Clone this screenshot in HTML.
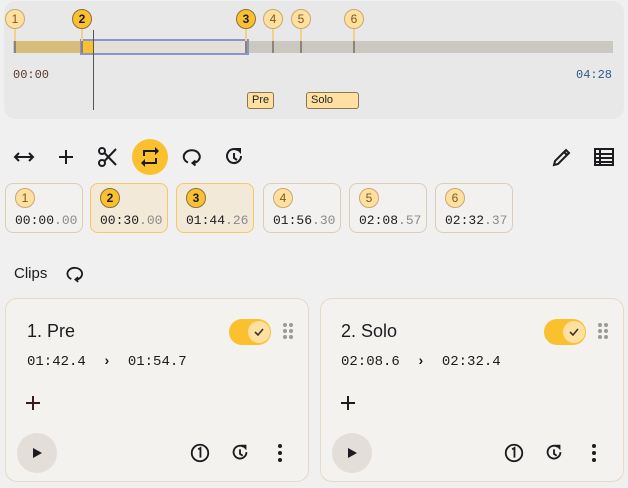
<!DOCTYPE html>
<html><head><meta charset="utf-8"><style>
*{box-sizing:border-box;margin:0;padding:0}
body{width:628px;height:488px;background:#f0f0f0;font-family:"Liberation Sans",sans-serif;position:relative;overflow:hidden;color:#1c1b1f}
.a{position:absolute}
.mk{position:absolute;width:20px;height:20px;border-radius:50%;background:#ffe0a0;border:1px solid #c9a870;font-size:12px;line-height:18px;text-align:center;color:#7a5a20;transform:translate(-50%,-50%)}
.mk.on{background:#fbc02d;border-color:#8a7040;color:#1c1b1f;font-weight:bold}
.tk{position:absolute;width:2px;top:41px;height:12px;background:#8c8478}
.ln{position:absolute;width:2px;top:29px;height:12px;background:#f5cf8a}
.mono{font-family:"Liberation Mono","DejaVu Sans Mono",monospace}
.chip{position:absolute;top:183px;width:78px;height:50px;border:1.5px solid #dccdb5;border-radius:8px;background:#f2f1ef}
.chip.on{background:#f2e9d8;border-color:#f5c865}
.chip .mk{left:9px;top:4px;transform:none}
.chip .t{position:absolute;left:9px;top:29px;font-size:13px;color:#1c1b1f}
.chip .t span{color:#8a8a8a}
.card{position:absolute;top:298px;width:304px;height:184px;background:#f4f2ee;border:1px solid #e6dac6;border-radius:12px}
.lbl{position:absolute;top:92px;height:17px;background:#ffe0a0;border:1px solid #8a7654;border-radius:3px;font-size:11px;line-height:15px;padding-left:4px;color:#222}
svg{position:absolute}
</style></head><body>
<div class="a" style="left:4px;top:1px;width:620px;height:118px;background:#e8e8e8;border-radius:12px"></div>
<div class="a" style="left:13px;top:41px;width:600px;height:12px;background:#cbc8c2"></div>
<div class="a" style="left:14px;top:41px;width:68px;height:12px;background:#d7bd7b"></div>
<div class="a" style="left:80px;top:39px;width:169px;height:16px;background:#e4dfd8;border:2px solid #8a96c8"></div>
<div class="a" style="left:82px;top:41px;width:11px;height:12px;background:#fbc02d"></div>
<div class="ln" style="left:14px"></div><div class="ln" style="left:81px"></div><div class="ln" style="left:245px"></div><div class="ln" style="left:272px"></div><div class="ln" style="left:300px"></div><div class="ln" style="left:353px"></div>
<div class="tk" style="left:14px"></div><div class="tk" style="left:81px"></div><div class="tk" style="left:245px"></div><div class="tk" style="left:272px"></div><div class="tk" style="left:300px"></div><div class="tk" style="left:353px"></div>
<div class="a" style="left:93px;top:30px;width:1px;height:80px;background:#555"></div>
<div class="mk" style="left:15px;top:19px">1</div>
<div class="mk on" style="left:82px;top:19px">2</div>
<div class="mk on" style="left:246px;top:19px">3</div>
<div class="mk" style="left:273px;top:19px">4</div>
<div class="mk" style="left:301px;top:19px">5</div>
<div class="mk" style="left:354px;top:19px">6</div>
<div class="a mono" style="left:13px;top:68px;font-size:12px;color:#5a3a2a">00:00</div>
<div class="a mono" style="left:576px;top:68px;font-size:12px;color:#2d5a8a">04:28</div>
<div class="lbl" style="left:247px;width:27px">Pre</div>
<div class="lbl" style="left:306px;width:53px">Solo</div>

<svg style="left:12px;top:145px" width="24" height="24" viewBox="0 0 24 24"><path d="M3 12h18M7 8l-4 4 4 4M17 8l4 4-4 4" fill="none" stroke="#1c1b1f" stroke-width="2"/></svg>
<svg style="left:54px;top:145px" width="24" height="24" viewBox="0 0 24 24"><path d="M12 5v14M5 12h14" stroke="#1c1b1f" stroke-width="2"/></svg>
<svg style="left:96px;top:145px" width="24" height="24" viewBox="0 0 24 24"><circle cx="6" cy="6" r="3" fill="none" stroke="#1c1b1f" stroke-width="2"/><circle cx="6" cy="18" r="3" fill="none" stroke="#1c1b1f" stroke-width="2"/><path d="M8.5 8L20 20M8.5 16L20 4" stroke="#1c1b1f" stroke-width="2"/></svg>
<div class="a" style="left:132px;top:139px;width:36px;height:36px;border-radius:50%;background:#fbc02d"></div>
<svg style="left:138px;top:145px" width="24" height="24" viewBox="0 0 24 24"><path d="M7 7h10v3l4-4-4-4v3H5v6h2zM17 17H7v-3l-4 4 4 4v-3h12v-6h-2z" fill="#1c1b1f"/></svg>
<svg style="left:180px;top:145px" width="24" height="24" viewBox="0 0 24 24"><path d="M8 17.5A8 6.5 0 1 1 14 18" fill="none" stroke="#1c1b1f" stroke-width="2"/><path d="M15.5 15.5L12.5 18l3 2.5" fill="none" stroke="#1c1b1f" stroke-width="2"/></svg>
<svg style="left:222px;top:145px" width="24" height="24" viewBox="0 0 24 24"><path d="M19 11a7 7 0 1 1-3-5.7" fill="none" stroke="#1c1b1f" stroke-width="2"/><path d="M13 3h6v6z" fill="#1c1b1f"/><path d="M12 8v5l3 2" fill="none" stroke="#1c1b1f" stroke-width="2"/></svg>
<svg style="left:550px;top:145px" width="24" height="24" viewBox="0 0 24 24"><path d="M4 20l1-4L16 5l3 3L8 19zM14 7l3 3" fill="none" stroke="#1c1b1f" stroke-width="2"/></svg>
<svg style="left:592px;top:145px" width="24" height="24" viewBox="0 0 24 24"><rect x="3" y="4" width="18" height="16" fill="none" stroke="#1c1b1f" stroke-width="2"/><path d="M3 9h18M3 13h18M3 17h18M8 4v16" stroke="#1c1b1f" stroke-width="2"/></svg>

<div class="chip" style="left:5px"><div class="mk">1</div><div class="t mono">00:00<span>.00</span></div></div>
<div class="chip on" style="left:90px"><div class="mk on">2</div><div class="t mono">00:30<span>.00</span></div></div>
<div class="chip on" style="left:176px"><div class="mk on">3</div><div class="t mono">01:44<span>.26</span></div></div>
<div class="chip" style="left:263px"><div class="mk">4</div><div class="t mono">01:56<span>.30</span></div></div>
<div class="chip" style="left:349px"><div class="mk">5</div><div class="t mono">02:08<span>.57</span></div></div>
<div class="chip" style="left:435px"><div class="mk">6</div><div class="t mono">02:32<span>.37</span></div></div>

<div class="a" style="left:14px;top:265px;font-size:15px">Clips</div>
<svg style="left:64px;top:263px" width="22" height="22" viewBox="0 0 24 24"><path d="M8 17.5A8 6.5 0 1 1 14 18" fill="none" stroke="#1c1b1f" stroke-width="2"/><path d="M15.5 15.5L12.5 18l3 2.5" fill="none" stroke="#1c1b1f" stroke-width="2"/></svg>

<div class="card" style="left:5px"></div>
<div class="card" style="left:320px"></div>
<div class="a" style="left:27px;top:321px;font-size:18px">1. Pre</div>
<div class="a" style="left:341px;top:321px;font-size:18px">2. Solo</div>
<div class="a mono" style="left:27px;top:354px;font-size:14px">01:42.4 &nbsp;<b>›</b>&nbsp; 01:54.7</div>
<div class="a mono" style="left:341px;top:354px;font-size:14px">02:08.6 &nbsp;<b>›</b>&nbsp; 02:32.4</div>

<div class="a" style="left:229px;top:319px;width:42px;height:26px;border-radius:13px;background:#fbc02d"></div>
<div class="a" style="left:248px;top:321px;width:22px;height:22px;border-radius:50%;background:#ffe0a0"></div>
<svg style="left:251px;top:324px" width="16" height="16" viewBox="0 0 16 16"><path d="M4 8l3 3 5-6" fill="none" stroke="#333" stroke-width="1.6"/></svg>
<div class="a" style="left:544px;top:319px;width:42px;height:26px;border-radius:13px;background:#fbc02d"></div>
<div class="a" style="left:563px;top:321px;width:22px;height:22px;border-radius:50%;background:#ffe0a0"></div>
<svg style="left:566px;top:324px" width="16" height="16" viewBox="0 0 16 16"><path d="M4 8l3 3 5-6" fill="none" stroke="#333" stroke-width="1.6"/></svg>

<svg style="left:282px;top:322px" width="12" height="18" viewBox="0 0 12 18"><g fill="#9a9a9a"><circle cx="3" cy="3" r="2"/><circle cx="9" cy="3" r="2"/><circle cx="3" cy="9" r="2"/><circle cx="9" cy="9" r="2"/><circle cx="3" cy="15" r="2"/><circle cx="9" cy="15" r="2"/></g></svg>
<svg style="left:597px;top:322px" width="12" height="18" viewBox="0 0 12 18"><g fill="#9a9a9a"><circle cx="3" cy="3" r="2"/><circle cx="9" cy="3" r="2"/><circle cx="3" cy="9" r="2"/><circle cx="9" cy="9" r="2"/><circle cx="3" cy="15" r="2"/><circle cx="9" cy="15" r="2"/></g></svg>

<svg style="left:23px;top:393px" width="20" height="20" viewBox="0 0 20 20"><path d="M10 3v14M3 10h14" stroke="#3a1a1a" stroke-width="2"/></svg>
<svg style="left:338px;top:393px" width="20" height="20" viewBox="0 0 20 20"><path d="M10 3v14M3 10h14" stroke="#1c1b1f" stroke-width="2"/></svg>

<div class="a" style="left:17px;top:433px;width:40px;height:40px;border-radius:50%;background:#e3ded8"></div>
<div class="a" style="left:332px;top:433px;width:40px;height:40px;border-radius:50%;background:#e3ded8"></div>
<svg style="left:31px;top:447px" width="12" height="12" viewBox="0 0 12 12"><path d="M2 1l9 5-9 5z" fill="#1c1b1f"/></svg>
<svg style="left:346px;top:447px" width="12" height="12" viewBox="0 0 12 12"><path d="M2 1l9 5-9 5z" fill="#1c1b1f"/></svg>

<svg style="left:189px;top:442px" width="22" height="22" viewBox="0 0 24 24"><circle cx="12" cy="12" r="9" fill="none" stroke="#1c1b1f" stroke-width="2"/><path d="M10 8l2.5-1.5V17" fill="none" stroke="#1c1b1f" stroke-width="2"/></svg>
<svg style="left:229px;top:442px" width="22" height="22" viewBox="0 0 24 24"><path d="M19 11a7 7 0 1 1-3-5.7" fill="none" stroke="#1c1b1f" stroke-width="2"/><path d="M13 3h6v6z" fill="#1c1b1f"/><path d="M12 8v5l3 2" fill="none" stroke="#1c1b1f" stroke-width="2"/></svg>
<svg style="left:274px;top:443px" width="12" height="20" viewBox="0 0 12 20"><g fill="#1c1b1f"><circle cx="6" cy="3" r="2"/><circle cx="6" cy="10" r="2"/><circle cx="6" cy="17" r="2"/></g></svg>

<svg style="left:503px;top:442px" width="22" height="22" viewBox="0 0 24 24"><circle cx="12" cy="12" r="9" fill="none" stroke="#1c1b1f" stroke-width="2"/><path d="M10 8l2.5-1.5V17" fill="none" stroke="#1c1b1f" stroke-width="2"/></svg>
<svg style="left:543px;top:442px" width="22" height="22" viewBox="0 0 24 24"><path d="M19 11a7 7 0 1 1-3-5.7" fill="none" stroke="#1c1b1f" stroke-width="2"/><path d="M13 3h6v6z" fill="#1c1b1f"/><path d="M12 8v5l3 2" fill="none" stroke="#1c1b1f" stroke-width="2"/></svg>
<svg style="left:588px;top:443px" width="12" height="20" viewBox="0 0 12 20"><g fill="#1c1b1f"><circle cx="6" cy="3" r="2"/><circle cx="6" cy="10" r="2"/><circle cx="6" cy="17" r="2"/></g></svg>
</body></html>
